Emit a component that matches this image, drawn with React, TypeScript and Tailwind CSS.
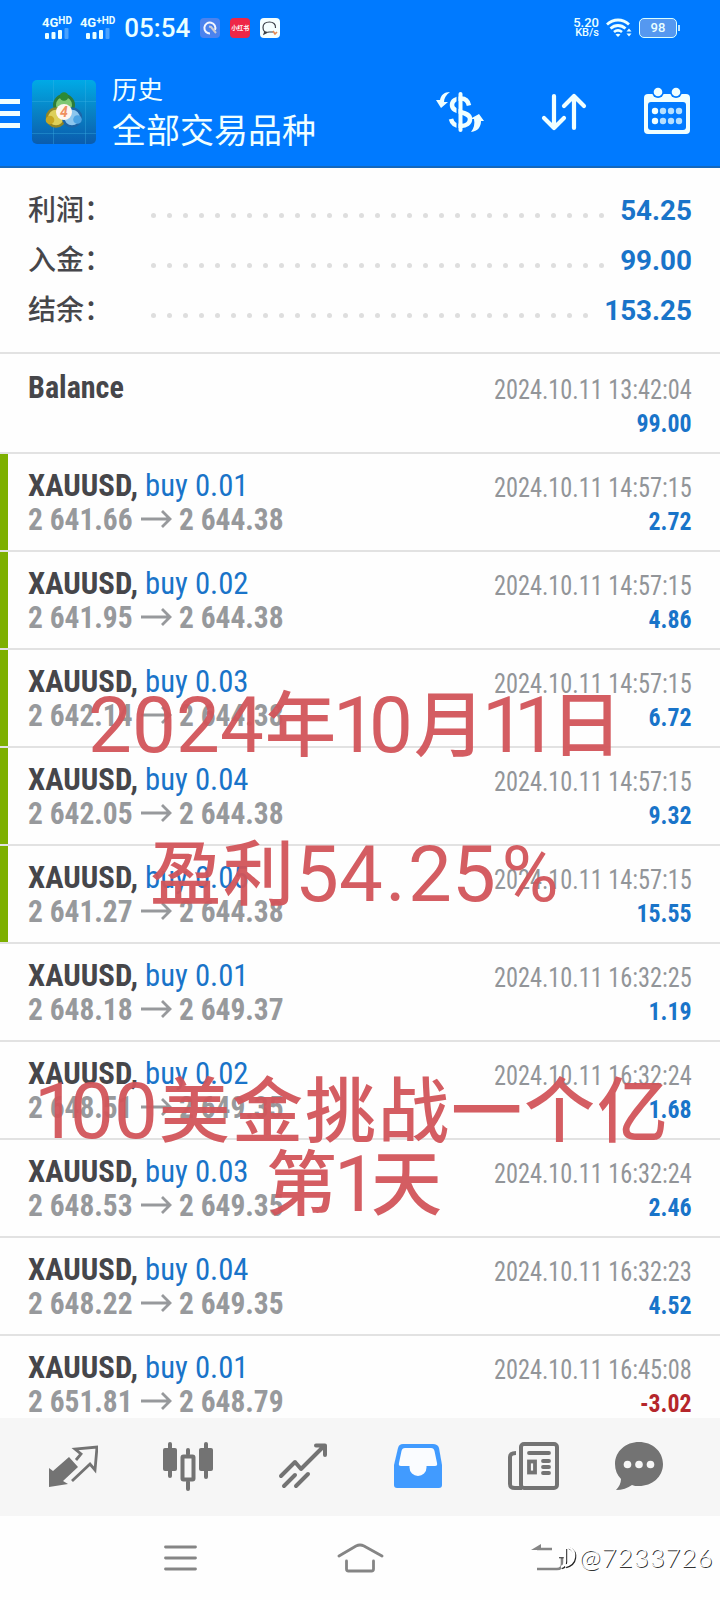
import clsx from 'clsx'
import type { ReactNode } from 'react'

const SUMMARY = [
  { label: '利润：', value: '54.25', dots: 29 },
  { label: '入金：', value: '99.00', dots: 29 },
  { label: '结余：', value: '153.25', dots: 28 },
]

const DEALS = [
  { lot: '0.01', open: '2 641.66', close: '2 644.38', time: '14:57:15', profit: '2.72', marked: true },
  { lot: '0.02', open: '2 641.95', close: '2 644.38', time: '14:57:15', profit: '4.86', marked: true },
  { lot: '0.03', open: '2 642.14', close: '2 644.38', time: '14:57:15', profit: '6.72', marked: true },
  { lot: '0.04', open: '2 642.05', close: '2 644.38', time: '14:57:15', profit: '9.32', marked: true },
  { lot: '0.05', open: '2 641.27', close: '2 644.38', time: '14:57:15', profit: '15.55', marked: true },
  { lot: '0.01', open: '2 648.18', close: '2 649.37', time: '16:32:25', profit: '1.19' },
  { lot: '0.02', open: '2 648.51', close: '2 649.35', time: '16:32:24', profit: '1.68' },
  { lot: '0.03', open: '2 648.53', close: '2 649.35', time: '16:32:24', profit: '2.46' },
  { lot: '0.04', open: '2 648.22', close: '2 649.35', time: '16:32:23', profit: '4.52' },
  { lot: '0.01', open: '2 651.81', close: '2 648.79', time: '16:45:08', profit: '-3.02' },
]

function Signal({ children }: { children: ReactNode }) {
  return (
    <div className="flex flex-col items-center">
      <span className="flex h-[11px] items-start text-[13px] leading-[11px] font-bold">{children}</span>
      <svg width="24" height="11" viewBox="0 0 24 11" fill="currentColor">
        <rect x="0" y="5" width="4" height="6" rx="1" />
        <rect x="6.5" y="4" width="4" height="7" rx="1" />
        <rect x="13" y="2" width="4" height="9" rx="1" />
        <rect x="19.5" y="0" width="4" height="11" rx="1" opacity="0.3" />
      </svg>
    </div>
  )
}

function StatusBar() {
  return (
    <div className="flex h-[55px] items-center pr-[40px] pl-[42px] text-[#eaffff]">
      <Signal>
        4G<span className="text-[10px] leading-[8px]">HD</span>
      </Signal>
      <div className="ml-[8px]">
        <Signal>
          4G<span className="text-[10px] leading-[8px]">+HD</span>
        </Signal>
      </div>
      <span className="ml-[9px] w-[68px] text-[26px] leading-none font-medium">05:54</span>
      <svg className="ml-[8px]" width="20" height="20" viewBox="0 0 20 20">
        <rect width="20" height="20" rx="4" fill="#4b83ee" />
        <path d="M10 15.5a5.5 5.5 0 1 1 5-3.5" fill="none" stroke="#f4f7ff" strokeWidth="2" />
        <path d="M9 8.500l2 .5 5 6" fill="none" stroke="#c9cdd6" strokeWidth="2" />
      </svg>
      <span className="ml-[10px] flex h-5 w-5 items-center justify-center overflow-hidden rounded bg-[#ee2747] text-[6px] font-bold whitespace-nowrap text-white">
        小红书
      </span>
      <svg className="ml-[10px]" width="20" height="20" viewBox="0 0 20 20">
        <rect width="20" height="20" rx="4" fill="#f5ffff" />
        <path d="M13 14H9c-4 1-6-1-6-4.500C3 5.500 6 4 9.500 4S16 6 15.500 10M5 13l-1 3 3-1.500" fill="none" stroke="#3b4048" strokeWidth="1.200" />
        <path d="M13 13l2 3 2-2" fill="none" stroke="#e58a55" strokeWidth="1.600" />
      </svg>
      <div className="ml-auto flex flex-col items-end text-[12px] leading-[10px] font-medium">
        <span className="text-[13px]">5.20</span>
        <span className="text-[11px]">KB/s</span>
      </div>
      <svg className="ml-[7px]" width="26" height="20" viewBox="0 0 26 20" fill="none" stroke="currentColor" strokeWidth="2.800">
        <path d="M1 6.500c6.500-6 15.500-6 22 0" />
        <path d="M4.500 10.500c4.500-4 10.500-4 15 0" />
        <path d="M8 14c2.500-2 5.500-2 8 0" />
        <path d="M9.500 16.500c1.500-1 3.500-1 5 0L12 19z" fill="currentColor" stroke="none" />
        <path d="M23 10.500l2.500 3h-5zM23 18.500l2.500-3h-5z" fill="currentColor" stroke="none" />
      </svg>
      <span className="ml-[7px] flex h-5 w-[38px] items-center justify-center rounded-[5px] border-[1.5px] border-[#d9ffff] bg-[#5598f0] text-[13px] font-medium">
        98
      </span>
      <span className="ml-px h-[6px] w-[2px] bg-[#b9e2ff]" />
    </div>
  )
}

function AppLogo() {
  return (
    <svg width="64" height="64" viewBox="0 0 64 64">
      <defs>
        <linearGradient id="tile" x1="0" y1="0" x2="0" y2="1">
          <stop offset="0" stopColor="#00aae6" />
          <stop offset="0.5" stopColor="#0882c4" />
          <stop offset="1" stopColor="#0a5cae" />
        </linearGradient>
      </defs>
      <rect width="64" height="64" rx="5" fill="url(#tile)" />
      <path d="M21.500 0v64M53.500 0v64M0 21.500h64M0 53.500h64" stroke="#3fb4e6" strokeOpacity="0.35" fill="none" />
      <circle cx="32" cy="25" r="9.500" fill="#7fc873" stroke="#2d7c38" strokeWidth="3" />
      <circle cx="24" cy="37.500" r="9" fill="#ddd05a" stroke="#8f8526" strokeWidth="2.500" />
      <circle cx="40" cy="37.500" r="9" fill="#8cc6ee" stroke="#1c66a8" strokeWidth="2.500" />
      <circle cx="32" cy="16.500" r="4.300" fill="#2c8a34" />
      <circle cx="18" cy="40" r="4.300" fill="#c7a723" />
      <circle cx="45.500" cy="39.500" r="4.300" fill="#4ba3e3" />
      <circle cx="32" cy="32" r="8" fill="#fff6ee" />
      <text x="32" y="37" textAnchor="middle" fontSize="14" fontWeight="700" fontStyle="italic" fill="#ef9060">
        4
      </text>
    </svg>
  )
}

function Header() {
  return (
    <header className="flex h-[113px] items-center border-b-2 border-[#1468bd] text-[#f0ffff]">
      <div className="flex w-5 flex-col gap-[7px] pt-[6px]">
        <span className="h-[5px] bg-current" />
        <span className="h-[5px] bg-current" />
        <span className="h-[5px] bg-current" />
      </div>
      <div className="ml-3 pt-[2px]">
        <AppLogo />
      </div>
      <div className="ml-4 flex flex-col pt-[4px]">
        <span className="text-[25.500px] leading-[36px]">历史</span>
        <span className="text-[34px] leading-[46px]">全部交易品种</span>
      </div>
      <svg className="mt-[2px] ml-auto" width="50" height="44" viewBox="0 0 50 44" fill="none" stroke="currentColor">
        <path d="M34 15.500c-1-5-4-7-8-7-5 0-9 2-9 6.500 0 9 18 5.500 18 14 0 4-3.500 7-9 7-5.500 0-9-2.500-10-7" strokeWidth="4.500" />
        <path d="M22.500 2v40" strokeWidth="2" stroke="#007aff" />
        <path d="M25.500 4v36" strokeWidth="4" strokeLinecap="round" />
        <path d="M15 2C9 2 6 5 5 10H1l5 8 7-6h-4c0-4 2-7 6-10z" fill="currentColor" stroke="none" />
        <path d="M36 42c7-1 10-5 10-11h3l-5-7-9 5h4c1 5 0 9-3 13z" fill="currentColor" stroke="none" />
      </svg>
      <svg className="mt-[2px] ml-[56px]" width="46" height="40" viewBox="0 0 46 40" fill="none" stroke="currentColor" strokeWidth="4.200" strokeLinecap="round" strokeLinejoin="round">
        <path d="M13 4v32M3 26l10 10 10-10M33 36V4M23 14L33 4l10 10" />
      </svg>
      <svg className="mr-[29px] ml-[56px]" width="48" height="48" viewBox="0 0 48 48">
        <rect x="1" y="7" width="46" height="40" rx="4" fill="currentColor" />
        <rect x="5" y="15" width="38" height="28" rx="3" fill="#007aff" />
        <circle cx="15" cy="5" r="6" fill="#007aff" />
        <circle cx="33" cy="5" r="6" fill="#007aff" />
        <circle cx="15" cy="5" r="4.300" fill="currentColor" />
        <circle cx="33" cy="5" r="4.300" fill="currentColor" />
        {[12, 20, 28, 36].map((x) => (
          <g key={x} fill={x === 12 ? '#f0ffff' : '#b5e0ff'}>
            <circle cx={x} cy="24" r="3.200" />
            <circle cx={x} cy="34" r="3.200" />
          </g>
        ))}
      </svg>
    </header>
  )
}

function Summary() {
  return (
    <section className="flex h-[186px] flex-col border-b-2 border-[#e2e2e2] pt-[15px] pr-[28px] pl-[28px]">
      {SUMMARY.map((row) => (
        <div key={row.label} className="flex h-[50px] items-center">
          <span className="w-[123px] pt-[5px] text-[28px] leading-[50px] font-medium text-[#46464a]">{row.label}</span>
          <span className="flex gap-[11px] pt-[14px]">
            {Array.from({ length: row.dots }, (_, i) => (
              <span key={i} className="h-[5px] w-[5px] rounded-full bg-[#dedede]" />
            ))}
          </span>
          <span className="ml-auto pt-[6px] text-[27.800px] leading-none font-bold text-[#1974c9]">{row.value}</span>
        </div>
      ))}
    </section>
  )
}

function DealList() {
  return (
    <section className="h-[1064px] overflow-hidden [font-stretch:75%]">
      <div className="flex h-[100px] justify-between border-b-2 border-[#e2e2e2] px-[28px] pt-4 leading-[34px]">
        <span className="origin-left scale-x-94 text-[32px] font-bold text-[#46464a]">Balance</span>
        <div className="flex origin-right scale-x-90 flex-col items-end pt-[3px]">
          <span className="text-[27px] text-[#929599]">2024.10.11 13:42:04</span>
          <span className="-mt-px text-[26.500px] font-bold text-[#1974c9]">99.00</span>
        </div>
      </div>
      {DEALS.map((deal, i) => (
        <div key={i} className="flex h-[98px] border-b-2 border-[#e2e2e2]">
          <span className={clsx('w-2', deal.marked && 'bg-[#7db000]')} />
          <div className="flex flex-1 justify-between pt-[14px] pr-[28px] pl-[20px] leading-[34px]">
            <div className="flex flex-col text-[32px]">
              <span className="origin-left scale-x-96 font-bold text-[#46464a]">
                XAUUSD, <span className="font-normal text-[#1974c9]">buy {deal.lot}</span>
              </span>
              <span className="flex items-center font-bold whitespace-nowrap text-[#97999c]">
                <span className="w-[113px]">
                  <span className="inline-block origin-left scale-x-92">{deal.open}</span>
                </span>
                <svg className="mr-[7px]" width="31" height="20" viewBox="0 0 31 20" fill="none" stroke="currentColor" strokeWidth="2.800">
                  <path d="M0 10h29M21 2l8 8-8 8" />
                </svg>
                <span className="origin-left scale-x-92">{deal.close}</span>
              </span>
            </div>
            <div className="flex origin-right scale-x-90 flex-col items-end pt-[3px] text-[27px]">
              <span className="text-[#929599]">2024.10.11 {deal.time}</span>
              <span
                className={clsx(
                  '-mt-px text-[26.500px] font-bold',
                  deal.profit.startsWith('-') ? 'text-[#b5262b]' : 'text-[#1974c9]',
                )}
              >
                {deal.profit}
              </span>
            </div>
          </div>
        </div>
      ))}
    </section>
  )
}

function TabBar() {
  return (
    <nav className="flex h-[98px] items-center gap-[65px] bg-[#f6f6f6] pb-[2px] pl-[48px] text-[#737373]">
      <svg width="50" height="50" viewBox="0 0 50 50">
        <path d="M1 27l4 3 16-14 9 10-15 14 5 3-19 3z" fill="currentColor" />
        <path d="M28 19l5-6-6-5 22-2-2 23-5-6-18 17" fill="none" stroke="currentColor" strokeWidth="2.800" />
      </svg>
      <svg width="52" height="50" viewBox="0 0 52 50" className="-mr-[2px]" fill="currentColor">
        <rect x="0" y="7" width="14" height="23" rx="2" />
        <rect x="5" y="1" width="4" height="36" rx="2" />
        <rect x="36" y="7" width="14" height="23" rx="2" />
        <rect x="41" y="1" width="4" height="37" rx="2" />
        <rect x="19.500" y="15.500" width="11" height="23" rx="1" fill="none" stroke="currentColor" strokeWidth="4" />
        <rect x="23" y="7" width="4" height="8" rx="2" />
        <rect x="23" y="39" width="4" height="11" rx="2" />
      </svg>
      <svg width="50" height="50" viewBox="0 0 50 50" fill="none" stroke="currentColor" strokeWidth="4" strokeLinecap="round" strokeLinejoin="round">
        <path d="M3 35l14-14 6 7L46 5M38 4.500h9V14M6 45l11-11M18 45l12-12" />
      </svg>
      <svg width="50" height="50" viewBox="0 0 50 50">
        <path d="M10 3h30c3 0 5 1 6 4l3 17v20c0 2-1 3-3 3H4c-2 0-3-1-3-3V24L5 7c1-3 2-4 5-4z" fill="#419bff" />
        <path d="M12 7h26c2 0 3 1 3.500 3L44 22c.500 2 0 3-2 3h-8.500v1.500a8.500 8.500 0 0 1-17 0V25H8c-2 0-2.500-1-2-3l2.500-12C9 8 10 7 12 7z" fill="#fafcff" />
      </svg>
      <svg width="52" height="50" viewBox="0 0 52 50" className="-mr-[2px]" fill="none" stroke="currentColor" strokeWidth="4">
        <rect x="13" y="3" width="36" height="44" rx="3" />
        <path d="M8 12c-4 0-6 1-6 4v27c0 3 1.500 4 5 4h7" />
        <path d="M21 12h20M35 20h6M35 26h6M35 32h6" strokeLinecap="round" strokeWidth="3.800" />
        <rect x="21" y="20.500" width="6" height="11" strokeWidth="3.800" />
      </svg>
      <svg className="-ml-[9px]" width="50" height="50" viewBox="0 0 50 50" fill="currentColor">
        <path d="M25 1c13 0 24 9 24 22S38 45 25 45c-3 0-5 0-7-1-4 3-10 5-16 5 3-3 5-7 5-11C3 34 1 29 1 23 1 10 12 1 25 1z" />
        <g fill="#f6f6f6">
          <circle cx="13.500" cy="23.500" r="3.800" />
          <circle cx="25" cy="23.500" r="3.800" />
          <circle cx="36.500" cy="23.500" r="3.800" />
        </g>
      </svg>
    </nav>
  )
}

function SystemNav() {
  return (
    <div className="relative flex h-[84px] items-center bg-[#fefefe] pl-[163px] text-[#858585]">
      <svg width="34" height="30" viewBox="0 0 34 30" fill="none" stroke="currentColor" strokeWidth="2.800" strokeLinecap="round">
        <path d="M2.500 4h30M2.500 15h30M2.500 26h30" />
      </svg>
      <svg className="ml-[139px]" width="48" height="30" viewBox="0 0 48 30" fill="none" stroke="currentColor" strokeWidth="2.800" strokeLinecap="round" strokeLinejoin="round">
        <path d="M3 13L20 3q4-2 8 0l18 10M10.500 18v8q0 2 2 2h23q2 0 2-2v-8" />
      </svg>
      <svg className="ml-[147px]" width="36" height="30" viewBox="0 0 36 30" fill="none" stroke="currentColor" strokeWidth="2.600">
        <path d="M6 6h15M6 26h20q5 0 5-5v-6" />
        <path d="M0 7l10-6v6z" fill="currentColor" stroke="none" />
      </svg>
      <div className="absolute top-[26px] left-[556px] flex items-center text-white">
        <svg width="23" height="30" viewBox="0 0 23 30" fill="none">
          <path d="M3 15h7M10 7v13q0 5-4 6M13 6q7 3 6 10t-9 9" stroke="#222" strokeWidth="2.400" />
          <path d="M2 14h7M9 6v13q0 5-4 6M12 5q7 3 6 10t-9 9" stroke="#fff" strokeWidth="2.400" />
        </svg>
        <span className="font-['Lato'] text-[26px] leading-[30px] font-light tracking-[0.9px] [text-shadow:1px_1px_0px_#333]">@7233726</span>
      </div>
    </div>
  )
}

function Caption({ text, className }: { text: string; className: string }) {
  return (
    <div className={clsx('absolute flex h-[90px] items-baseline text-[78px] leading-[90px] text-[#d2545a]/95', className)}>
      {text.split('').map((char, i) => (
        <span
          key={i}
          className={clsx(
            'flex shrink-0 justify-center',
            char === '1' && 'w-[32px] pl-[4px]',
            char === '.' && 'w-[25px]',
            char === '%' && 'w-[68px]',
            /[02-9]/.test(char) && 'w-[44px]',
            /[^\d.%]/.test(char) && 'w-[73px] -translate-y-[2px] text-[71px] font-medium',
          )}
        >
          {char}
        </span>
      ))}
    </div>
  )
}

export default function App() {
  return (
    <main className="relative flex h-[1600px] w-[720px] flex-col overflow-hidden bg-[#fefefe] font-['Roboto','Noto_Sans_CJK_SC',sans-serif]">
      <div className="bg-[#007aff]">
        <StatusBar />
        <Header />
      </div>
      <Summary />
      <DealList />
      <TabBar />
      <SystemNav />
      <Caption text="2024年10月11日" className="top-[681px] left-[88px]" />
      <Caption text="盈利54.25%" className="top-[830px] left-[149px]" />
      <Caption text="100美金挑战一个亿" className="top-[1067px] left-[38px]" />
      <Caption text="第1天" className="top-[1140px] left-[265px]" />
    </main>
  )
}
